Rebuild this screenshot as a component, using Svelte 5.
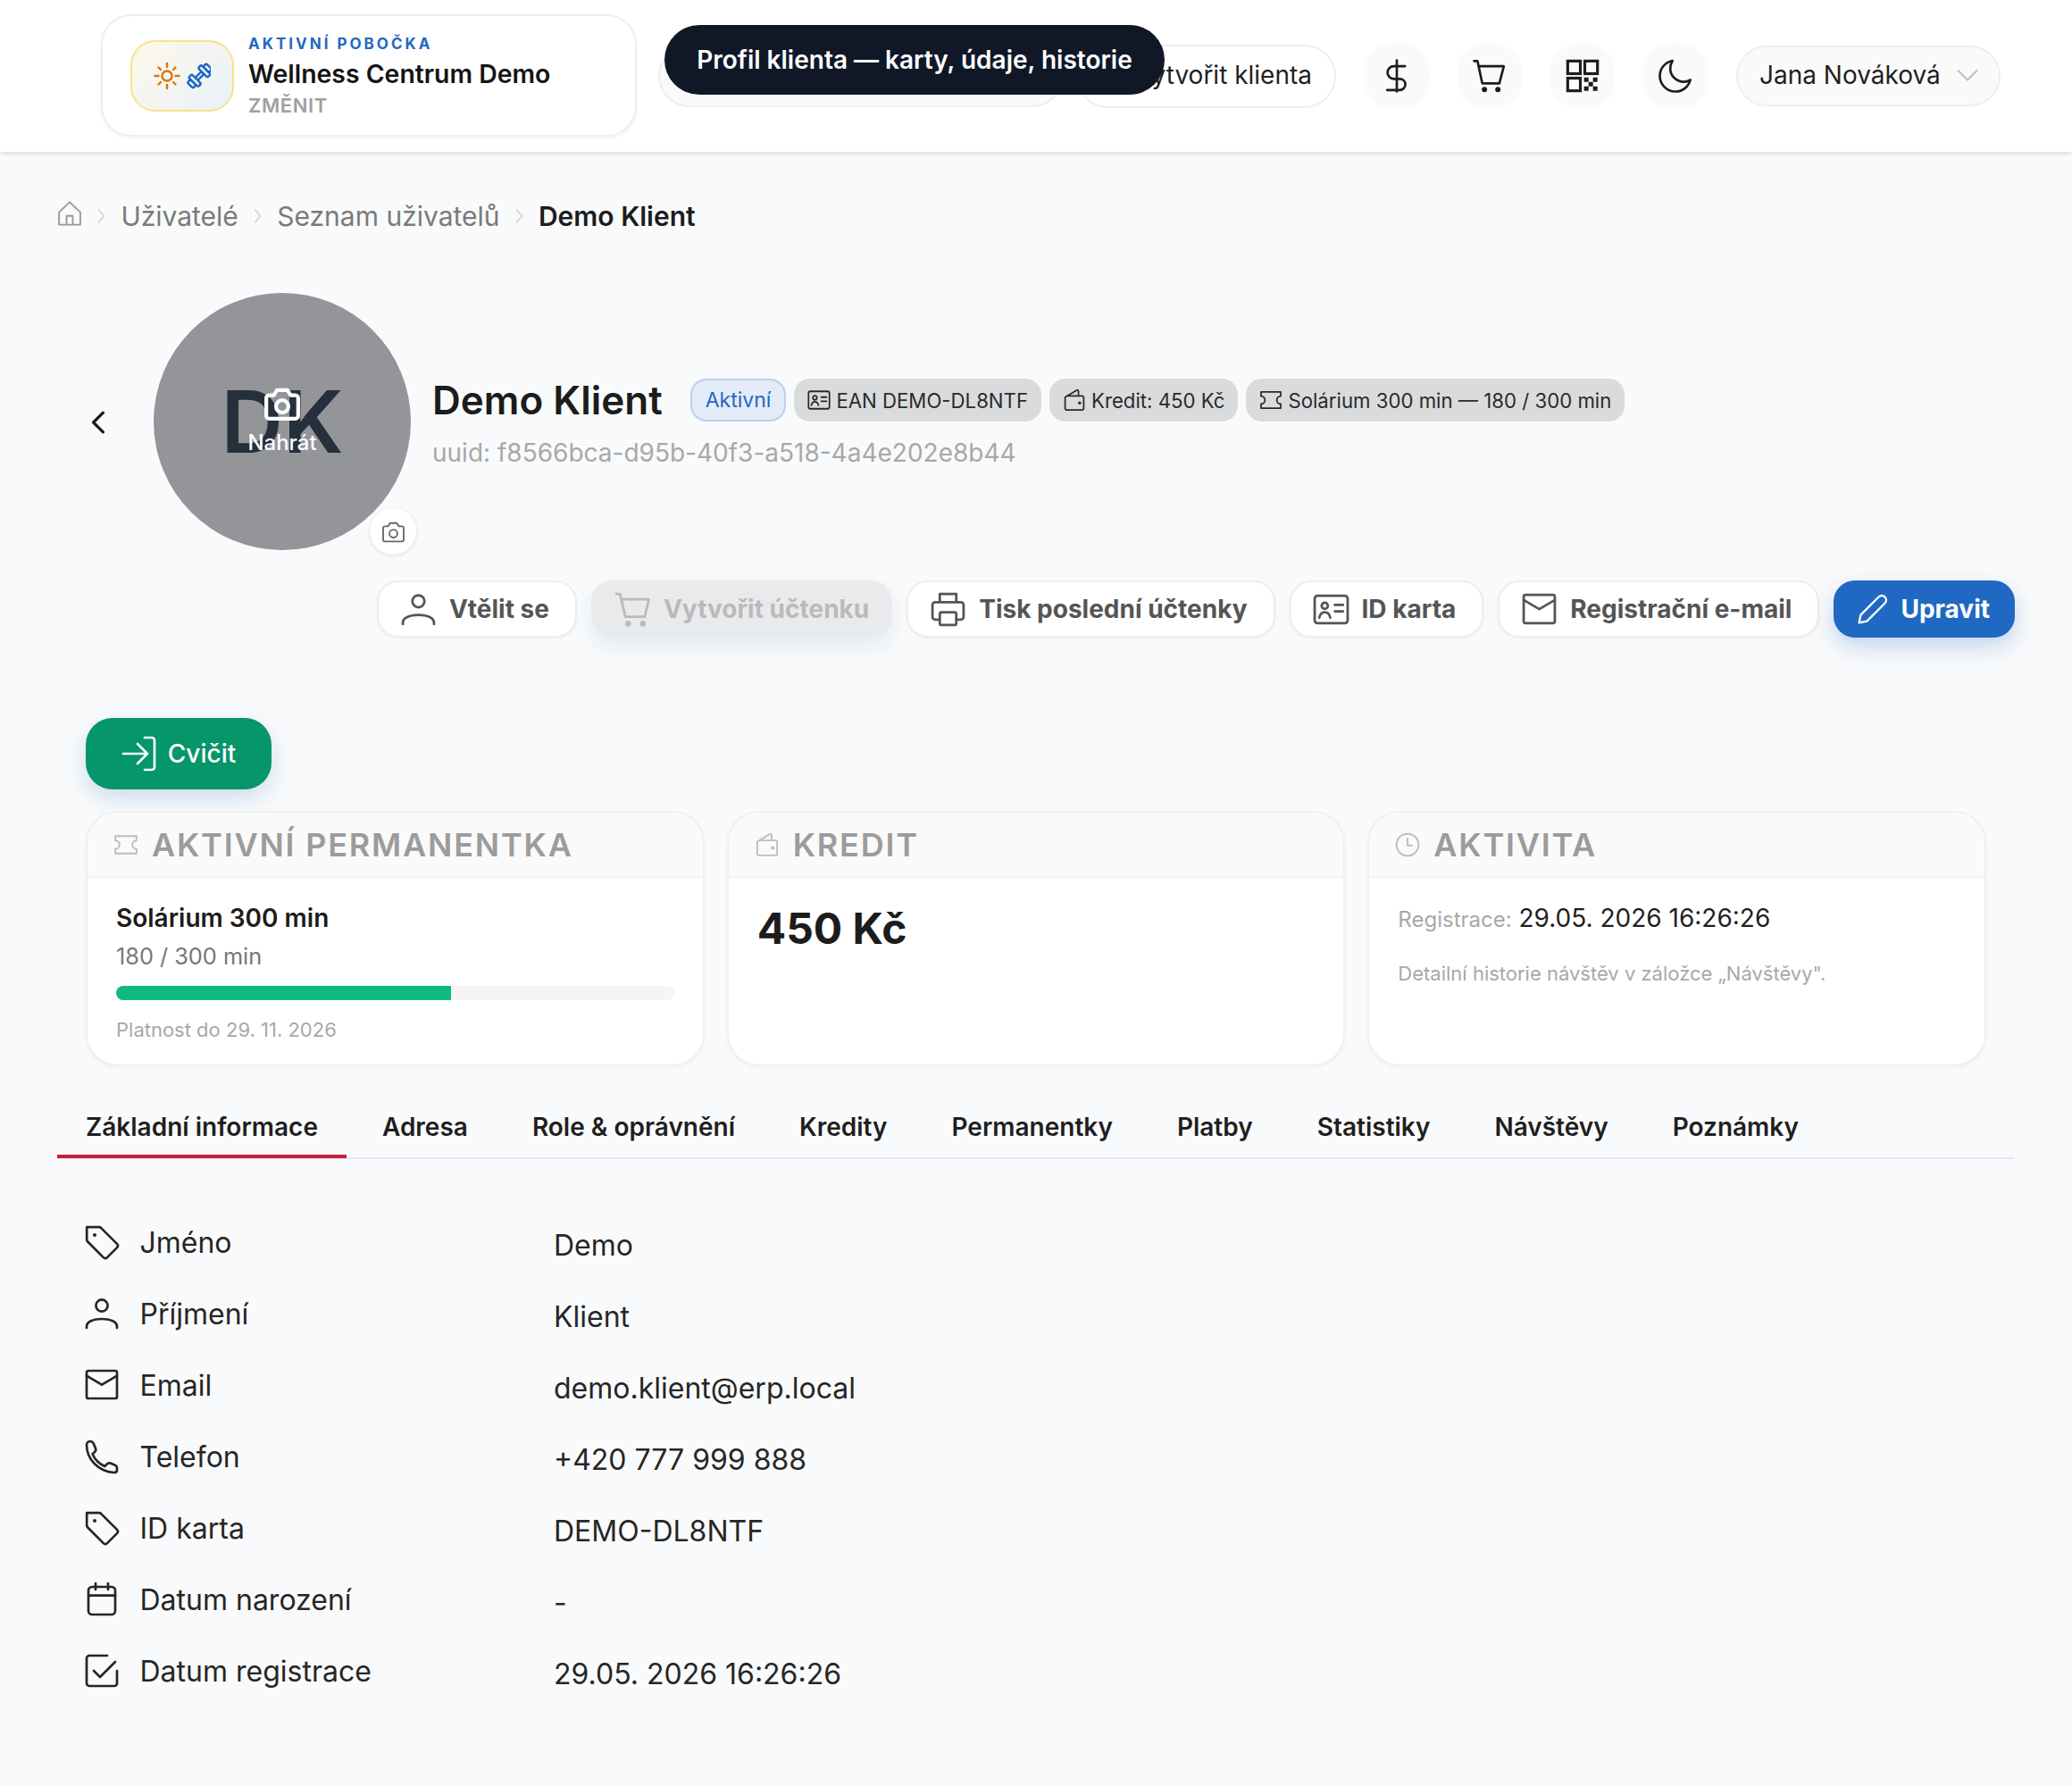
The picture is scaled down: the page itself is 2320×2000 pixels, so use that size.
<script>
  const tabs = ['Základní informace','Adresa','Role & oprávnění','Kredity','Permanentky','Platby','Statistiky','Návštěvy','Poznámky'];
  const rows = [
    ['tag','Jméno','Demo'],['user','Příjmení','Klient'],['mail','Email','demo.klient@erp.local'],['phone','Telefon','+420 777 999 888'],
    ['tag','ID karta','DEMO-DL8NTF'],['cal','Datum narození','-'],['check','Datum registrace','29.05. 2026 16:26:26']
  ];
</script>

{#snippet icon(name)}
  <svg class="ic" viewBox="2 2 20 20" fill="none" stroke="currentColor" stroke-width="1.35" stroke-linecap="round" stroke-linejoin="round">
    {#if name==='tag'}
      <path d="M3.6 3.600h7a1.500 1.500 0 0 1 1 .45l8.900 8.900a1.500 1.500 0 0 1 0 2.100l-5.500 5.500a1.500 1.500 0 0 1-2.100 0l-8.900-8.900a1.500 1.500 0 0 1-.4-1V3.600z"/><circle cx="8" cy="8" r="1" fill="currentColor" stroke="none"/>
    {:else if name==='user'}
      <circle cx="12" cy="7.500" r="3.300"/><path d="M3.500 20v-.8c0-2.500 3.500-4.200 8.500-4.200s8.500 1.700 8.500 4.200v.8"/>
    {:else if name==='mail'}
      <rect x="3.500" y="4" width="17" height="15.500" rx="1"/><path d="M3.500 6.800l8.500 5 8.500-5"/>
    {:else if name==='phone'}
      <path d="M3.500 5.500c0-1.200.9-2 2-2 .9 0 1.500.5 1.900 1.300l1.100 2.700c.3.800.1 1.500-.5 2L6.800 10.600c1.300 3.200 3.700 5.500 6.900 6.900l1.100-1.200c.5-.6 1.200-.8 2-.5l2.700 1.100c.7.300 1 .8 1 1.500v1.200c0 .9-.7 1.400-1.700 1.400C10.300 20.500 3.500 13.700 3.500 5.500z"/>
    {:else if name==='cal'}
      <rect x="4.500" y="5" width="15" height="15.500" rx="2"/><path d="M8.500 3v3.500M15.500 3v3.500M4.500 9.800h15"/>
    {:else if name==='check'}
      <path d="M20.500 12v7a1.500 1.500 0 0 1-1.500 1.500H5A1.500 1.500 0 0 1 3.500 19V5A1.500 1.500 0 0 1 5 3.500h10"/><path d="M7.500 12l3.500 3.500 8.500-8.500"/>
    {:else if name==='cart'}
      <path d="M3 3.500h2l3 12.500h10.500l2.300-9.500H5.700"/><circle cx="9.500" cy="19.800" r=".9" fill="currentColor"/><circle cx="17.500" cy="19.800" r=".9" fill="currentColor"/>
    {:else if name==='print'}
      <path d="M7.500 8V3.500h9V8M7.500 17.500H5A1.500 1.500 0 0 1 3.500 16V9.500A1.500 1.500 0 0 1 5 8h14a1.500 1.500 0 0 1 1.500 1.500V16a1.500 1.500 0 0 1-1.500 1.500h-2.500"/><rect x="7.500" y="13.500" width="9" height="7" rx="1"/>
    {:else if name==='card'}
      <rect x="3" y="4.500" width="18" height="15" rx="1.500"/><circle cx="8.500" cy="10" r="1.700"/><path d="M5.500 16.500c.4-2 1.500-3 3-3s2.600 1 3 3M14 9.500h4.500M14 13h4.500"/>
    {:else if name==='pencil'}
      <path d="M3.500 20.500l1-5L16 4a2.800 2.800 0 0 1 4 4L8.500 19.500z"/>
    {:else if name==='login'}
      <path d="M3 12h13M11 6.500l5.500 5.500-5.500 5.500M15 3h4a1.500 1.500 0 0 1 1.500 1.500v15A1.500 1.500 0 0 1 19 21h-4"/>
    {:else if name==='ticket'}
      <path d="M3.500 5h17v3.600a3.400 3.400 0 0 0 0 6.800V19h-17v-3.600a3.400 3.400 0 0 0 0-6.800z"/>
    {:else if name==='wallet'}
      <path d="M5.500 8.500h13A1.500 1.500 0 0 1 20 10v9a1.500 1.500 0 0 1-1.500 1.500h-13A1.500 1.500 0 0 1 4 19v-9.500L14 3.500a1 1 0 0 1 1.500 1v4"/><circle cx="16.500" cy="14.500" r=".7" fill="currentColor"/>
    {:else if name==='clock'}
      <circle cx="12" cy="12" r="8.800"/><path d="M12 7v5.500h3.500"/>
    {:else if name==='camera'}
      <path d="M3.500 9A1.500 1.500 0 0 1 5 7.500h2.500L9.200 4.800h5.600l1.700 2.700H19A1.500 1.500 0 0 1 20.500 9v9.500A1.500 1.500 0 0 1 19 20H5a1.500 1.500 0 0 1-1.500-1.500z"/><circle cx="12" cy="13.500" r="3.300"/>
    {:else if name==='home'}
      <path d="M3.500 11L12 3l8.500 8v10h-17z"/><path d="M9.500 21v-7h5v7"/>
    {/if}
  </svg>
{/snippet}

{#snippet sep()}
  <svg class="sep" viewBox="0 0 9 18" width="9" height="18" fill="none" stroke="#d2d2d2" stroke-width="1.500" stroke-linecap="round" stroke-linejoin="round"><path d="M1.500 2l6 7-6 7"/></svg>
{/snippet}

<div class="page">
  <header class="top">
    <div class="branch">
      <div class="logo">
        <svg viewBox="0 0 64 44" width="64" height="44" fill="none" stroke-linecap="round">
          <g stroke="#d97706" stroke-width="2.400">
            <circle cx="15" cy="22" r="5.500"/>
            <path d="M15 8v4M15 32v4M1.500 22h4M24.500 22h4M5.500 12.500l2.500 2.500M22 29l2.500 2.500M24.500 12.500L22 15M8 29l-2.500 2.500"/>
          </g>
          <g transform="translate(51.500 22) rotate(-45)" stroke="#1f69c2" stroke-width="2.500" stroke-linejoin="round" fill="#f4f6f6">
            <rect x="-5" y="-2" width="10" height="4"/>
            <rect x="-15" y="-4.500" width="5" height="9" rx="2"/>
            <rect x="10" y="-4.500" width="5" height="9" rx="2"/>
            <rect x="-10" y="-7.500" width="5" height="15" rx="2"/>
            <rect x="5" y="-7.500" width="5" height="15" rx="2"/>
          </g>
        </svg>
      </div>
      <div class="branch-text">
        <div class="eyebrow">AKTIVNÍ POBOČKA</div>
        <div class="bname">Wellness Centrum Demo</div>
        <div class="change">ZMĚNIT</div>
      </div>
    </div>
    <div class="tool-wrap">
      <div class="pill-blank"></div>
      <div class="pill-create">Vytvořit klienta</div>
      <div class="tooltip">Profil klienta — karty, údaje, historie</div>
    </div>
    <button class="round" aria-label="Ceny"><svg viewBox="0 0 24 24" fill="none" stroke="#1c1c1c" stroke-width="1.600" stroke-linecap="round"><path d="M12 1.500v21M17.500 5.500H10a4 4 0 0 0 0 8.500h4a3.700 3.700 0 0 1 0 7.500H5.500"/></svg></button>
    <button class="round" aria-label="Košík"><svg viewBox="0 0 24 24" fill="none" stroke="#1c1c1c" stroke-width="1.600" stroke-linecap="round" stroke-linejoin="round"><path d="M1.500 2h2.300L7 17h11.500l3-11.500H4.500"/><circle cx="8.500" cy="21.200" r="1" fill="#1c1c1c"/><circle cx="17.500" cy="21.200" r="1" fill="#1c1c1c"/></svg></button>
    <button class="round" aria-label="QR"><svg viewBox="0 0 24 24" fill="none" stroke="#1c1c1c" stroke-width="1.900"><rect x="2" y="2" width="8.500" height="8.500"/><rect x="13.500" y="2" width="8.500" height="8.500"/><rect x="2" y="13.500" width="8.500" height="8.500"/><path d="M13 13h3v3h-3zM19 13h3v3h-3zM16 16h3v3h-3zM13 19h3v3h-3zM19 19h3v3h-3z" fill="#1c1c1c" stroke="none"/></svg></button>
    <button class="round" aria-label="Motiv"><svg viewBox="0 0 24 24" fill="none" stroke="#1c1c1c" stroke-width="1.600" stroke-linejoin="round"><path d="M10 1.800C5 2.800 1.500 7 1.500 12c0 5.800 4.700 10.500 10.500 10.500 4.800 0 8.800-3.200 10-7.800-1.500.9-2.800 1.300-4.300 1.300-5 0-9.200-4-9.200-9 0-1.800.5-3.500 1.500-5.200z"/></svg></button>
    <div class="user">Jana Nováková <svg viewBox="0 0 24 24" width="24" height="24" fill="none" stroke="#bdbdbd" stroke-width="2" stroke-linecap="round" stroke-linejoin="round"><path d="M1.500 7L12 17.500 22.500 7"/></svg></div>
  </header>

  <main>
    <nav class="crumbs">
      <span class="home">{@render icon('home')}</span>
      {@render sep()}<span>Uživatelé</span>
      {@render sep()}<span>Seznam uživatelů</span>
      {@render sep()}<span class="cur">Demo Klient</span>
    </nav>

    <section class="hero">
      <button class="back" aria-label="Zpět"><svg viewBox="0 0 24 24" width="26" height="26" fill="none" stroke="#1c1c1c" stroke-width="3" stroke-linecap="round" stroke-linejoin="round"><path d="M17 2L7 12l10 10"/></svg></button>
      <div class="avatar">
        <span class="initials">DK</span>
        <div class="overlay">
          <span class="ov-ic">{@render icon('camera')}</span>
          <span class="ov-t">Nahrát</span>
        </div>
        <button class="cam" aria-label="Nahrát">{@render icon('camera')}</button>
      </div>
      <div class="info">
        <div class="title">
          <h1>Demo Klient</h1>
          <span class="badge blue">Aktivní</span>
          <span class="badge">{@render icon('card')}EAN DEMO-DL8NTF</span>
          <span class="badge">{@render icon('wallet')}Kredit: 450 Kč</span>
          <span class="badge">{@render icon('ticket')}Solárium 300 min — 180 / 300 min</span>
        </div>
        <div class="uuid">uuid: f8566bca-d95b-40f3-a518-4a4e202e8b44</div>
      </div>
    </section>

    <div class="actions">
      <button class="act">{@render icon('user')}Vtělit se</button>
      <button class="act dis">{@render icon('cart')}Vytvořit účtenku</button>
      <button class="act">{@render icon('print')}Tisk poslední účtenky</button>
      <button class="act">{@render icon('card')}ID karta</button>
      <button class="act">{@render icon('mail')}Registrační e-mail</button>
      <button class="act primary">{@render icon('pencil')}Upravit</button>
    </div>

    <button class="train">{@render icon('login')}Cvičit</button>

    <div class="cards">
      <article class="card">
        <div class="chead">{@render icon('ticket')}AKTIVNÍ PERMANENTKA</div>
        <div class="cbody">
          <div class="pname">Solárium 300 min</div>
          <div class="pcount">180 / 300 min</div>
          <div class="bar"><div class="fill" style="width:60.100%"></div></div>
          <div class="pvalid">Platnost do 29. 11. 2026</div>
        </div>
      </article>
      <article class="card">
        <div class="chead">{@render icon('wallet')}KREDIT</div>
        <div class="cbody"><div class="amount">450 Kč</div></div>
      </article>
      <article class="card">
        <div class="chead">{@render icon('clock')}AKTIVITA</div>
        <div class="cbody">
          <div class="reg"><span class="reg-l">Registrace:</span> 29.05. 2026 16:26:26</div>
          <div class="note">Detailní historie návštěv v záložce „Návštěvy".</div>
        </div>
      </article>
    </div>

    <div class="tabs">
      {#each tabs as t, i}
        <div class="tab" class:active={i===0}>{t}</div>
      {/each}
    </div>

    <div class="rows">
      {#each rows as r}
        <div class="row">
          <div class="label">{@render icon(r[0])}<span>{r[1]}</span></div>
          <div class="value">{r[2]}</div>
        </div>
      {/each}
    </div>
  </main>
</div>

<style>
  :global(body) { margin: 0; background: #f9fafb; }
  .page { font-family: Inter, "Liberation Sans", sans-serif; min-height: 2000px; color: #1f1f1f; background: #f9fafb; }
  button { font-family: inherit; }
  .ic { width: 1em; height: 1em; flex: none; }

  .top { height: 170px; box-sizing: border-box; background: #fff; box-shadow: 0 2px 5px rgba(148,163,184,.35); display: flex; align-items: center; padding: 0 81px 0 113px; position: relative; }
  .branch { width: 600px; height: 137px; flex: none; box-sizing: border-box; margin-top: -1px; border: 2px solid #eeeeee; border-radius: 34px; background: #fff; box-shadow: 0 2px 4px rgba(0,0,0,.05); display: flex; align-items: center; gap: 16px; padding-left: 31px; }
  .logo { width: 116px; height: 80px; flex: none; box-sizing: border-box; border: 2px solid #fde08a; border-radius: 28px; background: linear-gradient(135deg,#fdf9ea,#e9f1f8); display: flex; align-items: center; justify-content: center; }
  .eyebrow { font-size: 17px; line-height: 22px; font-weight: 700; letter-spacing: 3px; color: #1f69c2; }
  .bname { font-size: 28.400px; line-height: 38px; font-weight: 600; color: #141414; margin-top: 4px; }
  .change { font-size: 22px; line-height: 28px; font-weight: 600; color: #a0a0a0; letter-spacing: .6px; margin-top: 2px; }

  .tool-wrap { position: relative; display: flex; width: 759px; flex: none; margin-left: 24px; gap: 14px; justify-content: flex-end; }
  .pill-blank { flex: 1; height: 70px; box-sizing: border-box; border: 2px solid #eee; border-radius: 35px; background: #fafafa; }
  .pill-create { width: 291px; height: 71px; box-sizing: border-box; border: 2px solid #eee; border-radius: 36px; background: #fff; font-size: 28px; display: flex; align-items: center; justify-content: flex-end; padding: 0 25px 3px 0; font-weight: 400; }
  .tooltip { position: absolute; left: 7px; top: -22px; width: 560px; height: 78px; box-sizing: border-box; border-radius: 39px; background: #101828; color: #fff; font-size: 28px; font-weight: 600; display: flex; align-items: center; justify-content: center; white-space: nowrap; }
  .round { width: 72px; height: 72px; border-radius: 30px; border: 0; background: #fafafa; margin-left: 32px; padding: 16px; display: flex; flex: none; }
  .round svg { width: 100%; height: 100%; }
  .user { margin-left: 32px; width: 296px; height: 68px; box-sizing: border-box; flex: none; border: 2px solid #eee; border-radius: 34px; background: #fafafa; font-size: 28px; display: flex; align-items: center; gap: 18px; padding: 0 0 3px 24px; color: #1f1f1f; }

  main { padding: 0 65px 0 64px; }
  .crumbs { display: flex; align-items: center; height: 44px; margin-top: 50px; font-size: 30px; color: #7a7a7a; gap: 17.200px; }
  .crumbs .home { font-size: 28px; color: #9a9a9a; display: flex; margin-top: -7px; }
  .crumbs .cur { color: #1c1c1c; font-weight: 600; }

  .hero { display: flex; align-items: flex-start; margin-top: 64px; position: relative; }
  .back { position: absolute; left: 33px; top: 132px; border: 0; background: none; padding: 0; display: flex; }
  .avatar { margin-left: 108px; width: 288px; height: 288px; border-radius: 50%; background: #939598; position: relative; flex: none; display: flex; align-items: center; justify-content: center; }
  .initials { font-size: 96px; font-weight: 600; color: #26303d; }
  .overlay { position: absolute; inset: 0; display: flex; flex-direction: column; align-items: center; justify-content: center; color: #fff; font-size: 24px; font-weight: 500; padding-bottom: 3px; gap: 8px; }
  .ov-ic { font-size: 42px; display: flex; }
  .ov-ic .ic { stroke-width: 2; }
  .ov-t { line-height: 29px; }
  .cam { position: absolute; left: 242px; top: 241px; width: 52px; height: 52px; border-radius: 50%; border: 0; background: #fff; box-shadow: 0 1px 4px rgba(0,0,0,.12); color: #666; font-size: 27px; display: flex; align-items: center; justify-content: center; padding: 0; }
  .info { margin-left: 24px; padding-top: 96px; }
  .title { display: flex; align-items: center; gap: 9px; height: 48px; }
  h1 { margin: 0 22px 0 0; font-size: 44px; font-weight: 600; color: #1c1c1c; white-space: nowrap; }
  .badge { height: 48px; box-sizing: border-box; border-radius: 18px; background: #dadbdd; color: #2a2a2a; font-size: 22.200px; display: inline-flex; align-items: center; gap: 6px; padding: 0 15px; white-space: nowrap; }
  .badge .ic { font-size: 26px; }
  .badge.blue { background: #e3ecf8; border: 2px solid #b9d0ee; color: #1f69c2; padding: 0 15px; font-size: 23px; }
  .uuid { margin-top: 18px; font-size: 28px; color: #a8a8a8; }

  .actions { display: flex; justify-content: flex-end; gap: 16px; margin: 34px -1px 0 0; }
  .act { height: 64px; box-sizing: border-box; border: 2px solid #eee; border-radius: 24px; background: #fff; color: #555; font-size: 28px; font-weight: 700; display: inline-flex; align-items: center; gap: 14px; padding: 0 29px 0 24px; box-shadow: 0 1px 3px rgba(0,0,0,.05); }
  .act .ic { font-size: 41px; }
  .act.dis { background: #e9eaec; border-color: #e9eaec; color: #b9babc; box-shadow: 0 10px 24px rgba(31,105,194,.10); padding: 0 24px; }
  .act.primary { background: #1f69c2; border-color: #1f69c2; color: #fff; box-shadow: 0 10px 24px rgba(31,105,194,.25); padding: 0 26px 0 24px; }
  .act.primary .ic { font-size: 35px; }

  .train { display: flex; align-items: center; gap: 12px; margin: 90px 0 0 32px; width: 208px; height: 80px; justify-content: center; border: 0; border-radius: 30px; background: #059669; color: #fff; font-size: 28px; font-weight: 500; box-shadow: 0 10px 24px rgba(31,105,194,.2); }
  .train .ic { font-size: 40px; }

  .cards { display: flex; gap: 25px; margin: 24px 31px 0 32px; }
  .card { flex: 1; min-width: 0; height: 286px; box-sizing: border-box; border: 2px solid #f0f0f0; border-radius: 36px; background: #fff; overflow: hidden; box-shadow: 0 2px 4px rgba(0,0,0,.04); }
  .chead { height: 73px; box-sizing: border-box; background: #fafafa; border-bottom: 2px solid #f2f2f2; display: flex; align-items: center; gap: 15px; padding: 0 29px; font-size: 36px; font-weight: 600; letter-spacing: 1.800px; color: #9c9c9c; }
  .chead .ic { font-size: 28px; color: #bdbdbd; }
  .cbody { padding: 27px 32px; }
  .pname { font-size: 28px; font-weight: 600; line-height: 36px; color: #1c1c1c; }
  .pcount { font-size: 25.300px; line-height: 32px; color: #777; margin-top: 9px; }
  .bar { height: 16px; border-radius: 8px; background: #f5f5f5; margin-top: 17px; overflow: hidden; }
  .fill { height: 100%; background: #10b981; }
  .pvalid { font-size: 22px; line-height: 28px; color: #a8a8a8; margin-top: 19px; }
  .amount { font-size: 48px; font-weight: 700; line-height: 60px; color: #1c1c1c; }
  .reg { font-size: 28px; line-height: 36px; color: #1f1f1f; }
  .reg-l { font-size: 24px; color: #a8a8a8; }
  .note { font-size: 22px; line-height: 28px; color: #a8a8a8; margin-top: 28px; }

  .tabs { display: flex; margin-top: 40px; border-bottom: 2px solid #e2e8f0; gap: 8px; }
  .tab { padding: 0 32px; height: 62px; box-sizing: border-box; font-size: 28px; font-weight: 600; color: #1f1f1f; line-height: 56px; position: relative; white-space: nowrap; }
  .tab.active::after { content: ""; position: absolute; left: 0; right: 0; bottom: -1px; height: 4px; background: #c81e3a; }

  .rows { margin-top: 71px; padding-left: 30px; }
  .row { display: flex; height: 80px; align-items: flex-start; }
  .label { width: 526px; display: flex; align-items: center; gap: 22.500px; font-size: 32px; height: 44px; color: #262626; }
  .label .ic { font-size: 40px; }
  .value { font-size: 32px; color: #262626; line-height: 44px; margin-top: 4px; }
</style>
